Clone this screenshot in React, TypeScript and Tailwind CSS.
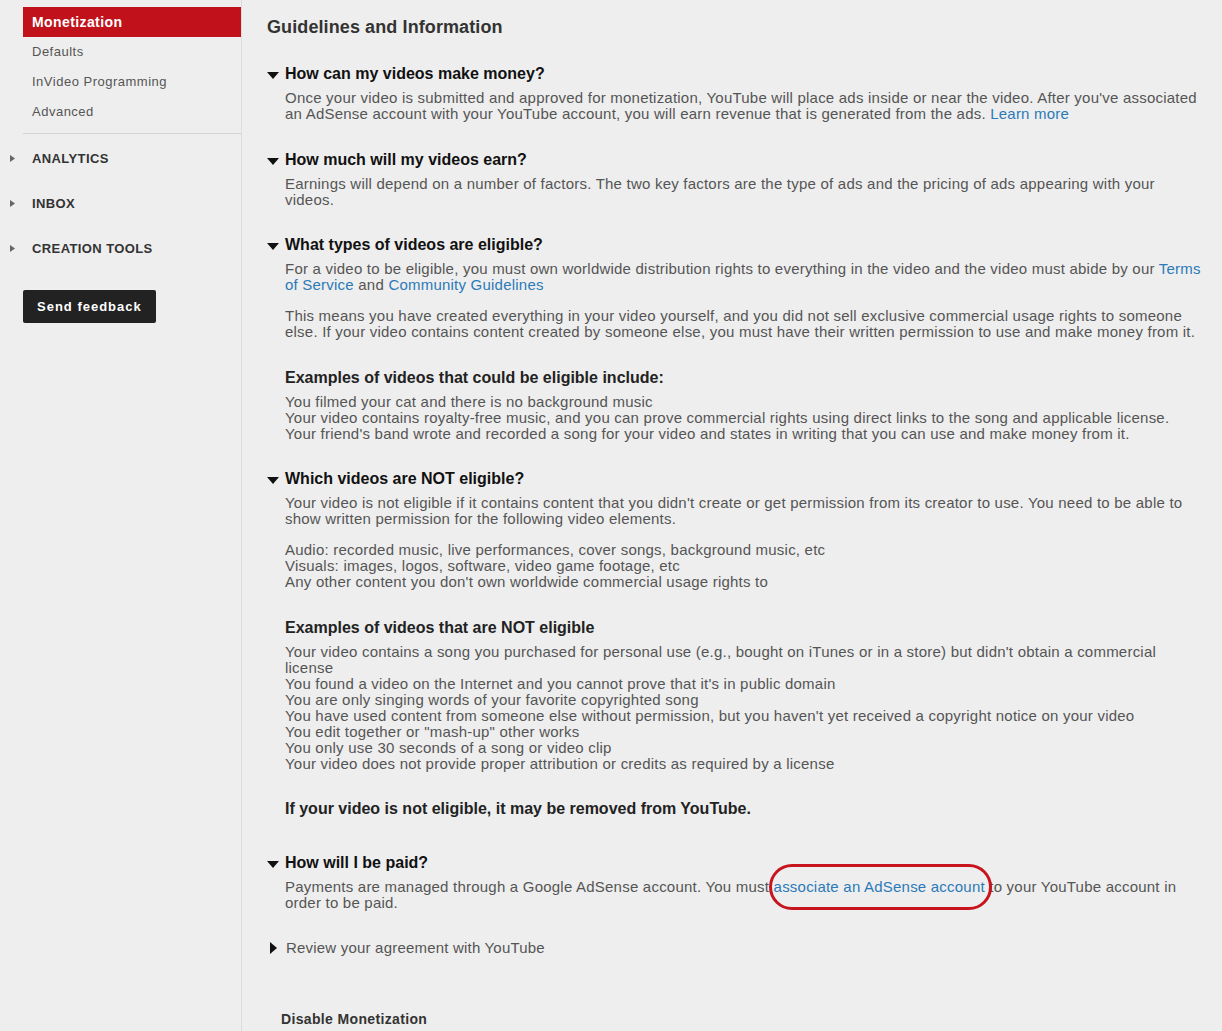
import React from "react";

const FONT = { fontFamily: '"Liberation Sans", Arial, sans-serif' };

function Caret({ open = true }: { open?: boolean }) {
  return open ? (
    <svg aria-hidden="true" width="12" height="8" viewBox="0 0 12 8" className="mt-[3px] shrink-0">
      <polygon points="0,0 12,0 6,7" fill="#111" />
    </svg>
  ) : (
    <svg aria-hidden="true" width="8" height="12" viewBox="0 0 8 12" className="shrink-0">
      <polygon points="0,0 7,6 0,12" fill="#111" />
    </svg>
  );
}

function SideCaret() {
  return (
    <svg aria-hidden="true" width="5" height="7" viewBox="0 0 5 7" className="shrink-0">
      <polygon points="0,0 5,3.5 0,7" fill="#666" />
    </svg>
  );
}

function Section({
  title,
  children,
  className = "mt-[28px]",
}: {
  title: string;
  children: React.ReactNode;
  className?: string;
}) {
  return (
    <div className={className}>
      <div className="flex items-center gap-[6px] h-[20px]">
        <Caret />
        <h3 className="text-[16px] font-bold text-[#111]">{title}</h3>
      </div>
      <div className="pl-[18px] mt-[6px]">{children}</div>
    </div>
  );
}

function Body({ children, className = "" }: { children: React.ReactNode; className?: string }) {
  return <p className={`text-[15px] leading-[16px] tracking-[0.22px] text-[#555] ${className}`}>{children}</p>;
}

function Link({ children }: { children: React.ReactNode }) {
  return <a className="text-[#2b7ab8]">{children}</a>;
}

function SubHeading({ children, className = "" }: { children: React.ReactNode; className?: string }) {
  return <h4 className={`text-[16px] leading-[20px] font-bold text-[#222] ${className}`}>{children}</h4>;
}

const SUB_ITEMS = ["Defaults", "InVideo Programming", "Advanced"];
const GROUPS = ["ANALYTICS", "INBOX", "CREATION TOOLS"];

export default function App() {
  return (
    <div className="flex min-h-[1031px] bg-[#eeeeee]" style={FONT}>
      {/* Sidebar */}
      <aside className="w-[242px] shrink-0 border-r border-[#dcdcdc] pt-[7px]">
        <div className="ml-[23px] h-[30px] flex items-center pl-[9px] bg-[#c1121b] text-white text-[14px] font-bold tracking-[0.4px]">
          Monetization
        </div>
        {SUB_ITEMS.map((item) => (
          <div key={item} className="ml-[23px] h-[30px] flex items-center pl-[9px] text-[13px] tracking-[0.5px] text-[#555]">
            {item}
          </div>
        ))}
        <div className="ml-[23px] mt-[6px] h-px bg-[#d4d4d4]" />
        <div className="mt-[2px]">
          {GROUPS.map((g) => (
            <div key={g} className="h-[45px] flex items-center pl-[10px] gap-[17px]">
              <SideCaret />
              <span className="text-[13px] font-bold text-[#333] tracking-[0.4px]">{g}</span>
            </div>
          ))}
        </div>
        <button className="ml-[23px] mt-[19px] h-[33px] px-[14px] rounded-[2px] bg-[#222222] text-white text-[13px] font-bold tracking-[1px]">
          Send feedback
        </button>
      </aside>

      {/* Main */}
      <main className="flex-1 pl-[25px] pr-[17px] pt-[16px] pb-[6px]">
        <h2 className="text-[18px] leading-[22px] font-bold text-[#333] tracking-[0.1px]">Guidelines and Information</h2>

        <div className="mt-[-2px]">
          <Section title="How can my videos make money?">
            <Body>
              Once your video is submitted and approved for monetization, YouTube will place ads inside or near the video. After you've associated an AdSense account with your YouTube account, you will earn revenue that is generated from the ads. <Link>Learn more</Link>
            </Body>
          </Section>

          <Section title="How much will my videos earn?">
            <Body>
              Earnings will depend on a number of factors. The two key factors are the type of ads and the pricing of ads appearing with your videos.
            </Body>
          </Section>

          <Section title="What types of videos are eligible?" className="mt-[27px]">
            <Body>
              For a video to be eligible, you must own worldwide distribution rights to everything in the video and the video must abide by our <Link>Terms of Service</Link> and <Link>Community Guidelines</Link>
            </Body>
            <Body className="mt-[15px]">
              This means you have created everything in your video yourself, and you did not sell exclusive commercial usage rights to someone else. If your video contains content created by someone else, you must have their written permission to use and make money from it.
            </Body>
            <SubHeading className="mt-[28px]">Examples of videos that could be eligible include:</SubHeading>
            <Body className="mt-[6px]">
              You filmed your cat and there is no background music
              <br />
              Your video contains royalty-free music, and you can prove commercial rights using direct links to the song and applicable license.
              <br />
              Your friend's band wrote and recorded a song for your video and states in writing that you can use and make money from it.
            </Body>
          </Section>

          <Section title="Which videos are NOT eligible?" className="mt-[27px]">
            <Body>
              Your video is not eligible if it contains content that you didn't create or get permission from its creator to use. You need to be able to show written permission for the following video elements.
            </Body>
            <Body className="mt-[15px]">
              Audio: recorded music, live performances, cover songs, background music, etc
              <br />
              Visuals: images, logos, software, video game footage, etc
              <br />
              Any other content you don't own worldwide commercial usage rights to
            </Body>
            <SubHeading className="mt-[28px]">Examples of videos that are NOT eligible</SubHeading>
            <Body className="mt-[6px]">
              Your video contains a song you purchased for personal use (e.g., bought on iTunes or in a store) but didn't obtain a commercial license
              <br />
              You found a video on the Internet and you cannot prove that it's in public domain
              <br />
              You are only singing words of your favorite copyrighted song
              <br />
              You have used content from someone else without permission, but you haven't yet received a copyright notice on your video
              <br />
              You edit together or "mash-up" other works
              <br />
              You only use 30 seconds of a song or video clip
              <br />
              Your video does not provide proper attribution or credits as required by a license
            </Body>
            <SubHeading className="mt-[27px]">If your video is not eligible, it may be removed from YouTube.</SubHeading>
          </Section>

          <Section title="How will I be paid?" className="mt-[34px]">
            <Body>
              Payments are managed through a Google AdSense account. You must{" "}
              <span className="relative">
                <Link>associate an AdSense account</Link>
                <span
                  aria-hidden="true"
                  className="absolute -left-[5px] -right-[7px] -top-[14px] -bottom-[15px] rounded-[24px] border-[3px] border-[#c8151d]"
                />
              </span>{" "}
              to your YouTube account in order to be paid.
            </Body>
          </Section>

          <div className="mt-[29px] flex items-center gap-[8px] h-[16px] pl-[3px]">
            <Caret open={false} />
            <span className="text-[15px] tracking-[0.2px] text-[#555]">Review your agreement with YouTube</span>
          </div>

          <div className="mt-[53px] pl-[14px] text-[14px] font-bold tracking-[0.35px] text-[#333]">Disable Monetization</div>
        </div>
      </main>
    </div>
  );
}
